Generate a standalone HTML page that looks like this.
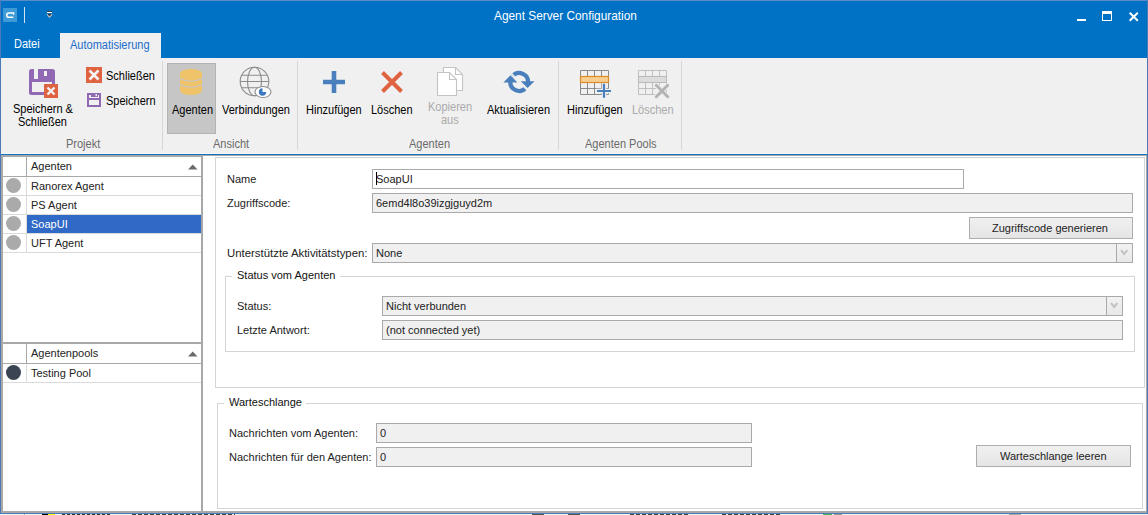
<!DOCTYPE html>
<html><head><meta charset="utf-8">
<style>
*{margin:0;padding:0;box-sizing:border-box}
html,body{width:1148px;height:515px;overflow:hidden;background:#fff}
body{position:relative;font-family:"Liberation Sans",sans-serif;font-size:11px;color:#000}
.a{position:absolute}
svg.a{overflow:visible}
.r{position:absolute;white-space:nowrap;font-size:12px;line-height:14px;transform:scaleX(0.917);transform-origin:0 0;color:#000}
.t{position:absolute;white-space:nowrap;font-size:11px;line-height:13px;color:#222}
.bx{position:absolute;border:1px solid #a9a9a9;background:#f0f0f0}
.sep{position:absolute;width:1px;background:#d6d6d6}
.ln{position:absolute;background:#dadada}
.grp{position:absolute;border:1px solid #d5d5d5}
.btn{position:absolute;border:1px solid #adadad;background:linear-gradient(#f0f0f0,#e5e5e5)}
.dot{position:absolute;width:15px;height:15px;border-radius:50%;background:#aaa}
</style></head><body>
<!-- ===== title bar ===== -->
<div class="a" style="left:0;top:0;width:1148px;height:58px;background:#0072c6"></div>
<div class="a" style="left:0;top:0;width:1148px;height:1px;background:#5a8cc8"></div>
<div class="a" style="left:3px;top:8px;width:14px;height:14px;background:#3d9ad6"></div>
<svg class="a" style="left:3px;top:8px" width="14" height="14"><path d="M10.8 5.1H5.8A2.05 2.05 0 0 0 5.8 9.2H10.3" fill="none" stroke="#fff" stroke-width="1.5"/><path d="M10.6 4.4V6.8" stroke="#fff" stroke-width="1.4"/></svg>
<div class="a" style="left:24px;top:7px;width:1px;height:16px;background:#d5e0ee"></div>
<svg class="a" style="left:46px;top:10px" width="8" height="9"><rect x="1" y="1" width="5" height="1" fill="#3a3a3a"/><rect x="1" y="2" width="5" height="1" fill="#fff"/><path d="M0.8 4H6.2L3.5 7.8Z" fill="#3a3a3a"/><path d="M1 4.2L3.5 7.4L6 4.2" fill="none" stroke="#fff" stroke-width="0.9"/></svg>
<div class="t" style="left:494px;top:9px;font-size:11.85px;line-height:14px;color:#fff">Agent Server Configuration</div>
<div class="a" style="left:1077px;top:19px;width:9px;height:2px;background:#fff"></div>
<div class="a" style="left:1102px;top:11px;width:10px;height:10px;border:1px solid #fff;border-top-width:3px"></div>
<svg class="a" style="left:1129px;top:12px" width="10" height="10"><path d="M0.7 0.7L8.8 8.8M8.8 0.7L0.7 8.8" stroke="#fff" stroke-width="2"/></svg>

<!-- ===== tabs ===== -->
<div class="r" style="left:14px;top:37px;color:#fff">Datei</div>
<div class="a" style="left:60px;top:33px;width:101px;height:25px;background:#f0f0f0"></div>
<div class="r" style="left:70px;top:38px;color:#1b6ecb">Automatisierung</div>

<!-- ===== ribbon ===== -->
<div class="a" style="left:0;top:58px;width:1148px;height:96px;background:#f0f0f0"></div>
<div class="a" style="left:0;top:153px;width:1148px;height:1px;background:#faf6f0"></div>
<div class="a" style="left:0;top:154px;width:1148px;height:1px;background:#0f72c9"></div>
<div class="sep" style="left:162px;top:61px;height:89px"></div>
<div class="sep" style="left:297px;top:61px;height:89px"></div>
<div class="sep" style="left:558px;top:61px;height:89px"></div>
<div class="sep" style="left:681px;top:61px;height:89px"></div>
<div class="a" style="left:167px;top:63px;width:49px;height:71px;background:#c6c6c6;border:1px solid #b3b3b3"></div>

<!-- save & close icon -->
<svg class="a" style="left:29px;top:69px" width="30" height="30">
 <path d="M0 2.5A2.5 2.5 0 0 1 2.5 0H5V10H0Z" fill="#9168b4"/>
 <path d="M9 0H23.5A2.5 2.5 0 0 1 26 2.5V10H9Z" fill="#9168b4"/>
 <rect x="15" y="2" width="3" height="5" fill="#f0f0f0"/>
 <rect x="0" y="10" width="26" height="3" fill="#9168b4"/>
 <path d="M0 13H3V23H15V26H2.5A2.5 2.5 0 0 1 0 23.5Z" fill="#9168b4"/>
 <rect x="23" y="13" width="3" height="2" fill="#9168b4"/>
 <rect x="15" y="15" width="14" height="14" fill="#df6340"/>
 <path d="M18.5 18.5L25.5 25.5M25.5 18.5L18.5 25.5" stroke="#f4f4f4" stroke-width="2.4"/>
</svg>
<!-- small close -->
<svg class="a" style="left:86px;top:67px" width="16" height="16">
 <rect width="16" height="16" fill="#df6340"/>
 <path d="M3.5 3.5L12.5 12.5M12.5 3.5L3.5 12.5" stroke="#f4f4f4" stroke-width="2.6"/>
</svg>
<!-- small save -->
<svg class="a" style="left:87px;top:93px" width="14" height="14">
 <path d="M1 1H13V13H1Z" fill="none" stroke="#9168b4" stroke-width="2"/>
 <rect x="4" y="0" width="7" height="4" fill="#9168b4"/>
 <rect x="8.5" y="1" width="1.5" height="2.2" fill="#f0f0f0"/>
 <rect x="1" y="5" width="12" height="2" fill="#9168b4"/>
</svg>
<!-- database -->
<svg class="a" style="left:180px;top:69px" width="22" height="26">
 <rect x="0" y="4" width="22" height="18" fill="#efc36a"/>
 <ellipse cx="11" cy="4.5" rx="11" ry="4.5" fill="#efc36a"/>
 <ellipse cx="11" cy="21.5" rx="11" ry="4.5" fill="#efc36a"/>
 <path d="M0 9.5Q11 15 22 9.5M0 15.5Q11 21 22 15.5" fill="none" stroke="#c6c6c6" stroke-width="1.2"/>
</svg>
<!-- globe -->
<svg class="a" style="left:239px;top:66px" width="34" height="32">
 <g fill="none" stroke="#8c8c8c" stroke-width="1.1">
  <circle cx="15.5" cy="15.5" r="14.3"/>
  <ellipse cx="15.5" cy="15.5" rx="7" ry="14.3"/>
  <path d="M1.2 15.5H29.8M3 9.2H28M3 21.8H28"/>
 </g>
 <ellipse cx="24" cy="26" rx="8" ry="5.5" fill="#fff" stroke="#8c8c8c" stroke-width="1.1"/>
 <path d="M23.5 22.3A3.7 3.7 0 1 0 27.2 26H23.5Z" fill="#3d78c0"/>
</svg>
<!-- plus -->
<svg class="a" style="left:323px;top:71px" width="22" height="22">
 <path d="M11 0V22M0 11H22" stroke="#4a7fbd" stroke-width="4.6"/>
</svg>
<!-- big X -->
<svg class="a" style="left:381px;top:71px" width="22" height="22">
 <path d="M1.5 1.5L20.5 20.5M20.5 1.5L1.5 20.5" stroke="#df6340" stroke-width="4"/>
</svg>
<!-- copy pages -->
<svg class="a" style="left:436px;top:66px" width="30" height="32">
 <path d="M7.5 1.5H19.5L26.5 8.5V24.5H7.5Z" fill="#fff" stroke="#c4c4c4" stroke-width="1.1"/>
 <path d="M19.5 1.5V8.5H26.5" fill="none" stroke="#c4c4c4" stroke-width="1.1"/>
 <path d="M1.5 6.5H13.5L20.5 13.5V29.5H1.5Z" fill="#fff" stroke="#c4c4c4" stroke-width="1.1"/>
 <path d="M13.5 6.5V13.5H20.5" fill="none" stroke="#c4c4c4" stroke-width="1.1"/>
</svg>
<!-- refresh -->
<svg class="a" style="left:500px;top:66px" width="40" height="32">
 <path d="M12.9 9.7A8.9 8.9 0 0 1 28.1 16.5" fill="none" stroke="#4a7fbd" stroke-width="4.3"/>
 <path d="M20.8 15.2H34.5L27.6 22Z" fill="#4a7fbd"/>
 <path d="M25.5 22.3A8.9 8.9 0 0 1 10.3 15.5" fill="none" stroke="#4a7fbd" stroke-width="4.3"/>
 <path d="M3.4 16.5H17.4L10.5 9.3Z" fill="#4a7fbd"/>
 <path d="M10.5 6.5L18.5 14.5M20.5 17.5L28 25" stroke="#f0f0f0" stroke-width="1.1"/>
</svg>
<!-- table + plus -->
<svg class="a" style="left:580px;top:70px" width="32" height="28">
 <g fill="none" stroke="#8a8a8a" stroke-width="1">
  <path d="M0.5 0.5H28.5V24.5H0.5Z"/>
  <path d="M7.5 0.5V24.5M14.5 0.5V24.5M21.5 0.5V24.5M0.5 6.5H28.5M0.5 12.5H28.5M0.5 18.5H28.5"/>
 </g>
 <rect x="0.5" y="6.5" width="28" height="6" fill="#f6cf90" stroke="#e08b2a" stroke-width="1.2"/>
 <path d="M24 13V29M16 21H32" stroke="#f0f0f0" stroke-width="4.6"/>
 <path d="M24 13.8V27.7M17 21H31" stroke="#4a7fbd" stroke-width="2.2"/>
</svg>
<!-- table + X disabled -->
<svg class="a" style="left:638px;top:70px" width="32" height="28">
 <g fill="none" stroke="#bfbfbf" stroke-width="1">
  <path d="M0.5 0.5H28.5V24.5H0.5Z"/>
  <path d="M7.5 0.5V24.5M14.5 0.5V24.5M21.5 0.5V24.5M0.5 6.5H28.5M0.5 12.5H28.5M0.5 18.5H28.5"/>
 </g>
 <rect x="0.5" y="6.5" width="28" height="6" fill="#dcdcdc" stroke="#b9b9b9" stroke-width="1"/>
 <path d="M18 15L30 27M30 15L18 27" stroke="#f0f0f0" stroke-width="5"/>
 <path d="M18.3 15.3L29.7 26.7M29.7 15.3L18.3 26.7" stroke="#b3b3b3" stroke-width="3" stroke-linecap="round"/>
</svg>

<div class="r" style="left:13px;top:102px">Speichern &amp;</div>
<div class="r" style="left:18px;top:115px">Schließen</div>
<div class="r" style="left:106px;top:69px">Schließen</div>
<div class="r" style="left:106px;top:94px">Speichern</div>
<div class="r" style="left:172px;top:103px">Agenten</div>
<div class="r" style="left:222px;top:103px">Verbindungen</div>
<div class="r" style="left:306px;top:103px">Hinzufügen</div>
<div class="r" style="left:371px;top:103px">Löschen</div>
<div class="r" style="left:428px;top:100px;color:#aaa">Kopieren</div>
<div class="r" style="left:441px;top:113px;color:#aaa">aus</div>
<div class="r" style="left:487px;top:103px">Aktualisieren</div>
<div class="r" style="left:567px;top:103px">Hinzufügen</div>
<div class="r" style="left:632px;top:103px;color:#aaa">Löschen</div>
<div class="r" style="left:66px;top:137px;color:#6a6a6a">Projekt</div>
<div class="r" style="left:213px;top:137px;color:#6a6a6a">Ansicht</div>
<div class="r" style="left:409px;top:137px;color:#6a6a6a">Agenten</div>
<div class="r" style="left:585px;top:137px;color:#6a6a6a">Agenten Pools</div>

<!-- ===== left panel ===== -->
<div class="a" style="left:1px;top:155px;width:202px;height:358px;border:2px solid #a8a8a8;background:#fff"></div>
<div class="a" style="left:26px;top:157px;width:1px;height:19px;background:#a8a8a8"></div>
<div class="a" style="left:3px;top:176px;width:198px;height:1px;background:#a8a8a8"></div>
<div class="ln" style="left:26px;top:177px;width:1px;height:76px"></div>
<div class="ln" style="left:3px;top:195px;width:198px;height:1px"></div>
<div class="ln" style="left:3px;top:214px;width:198px;height:1px"></div>
<div class="ln" style="left:3px;top:233px;width:198px;height:1px"></div>
<div class="ln" style="left:3px;top:252px;width:198px;height:1px"></div>
<div class="a" style="left:27px;top:215px;width:174px;height:18px;background:#3169c6"></div>
<svg class="a" style="left:188px;top:164px" width="10" height="6"><path d="M0 5.5H9.5L4.75 0.5Z" fill="#6b6b6b"/></svg>
<div class="t" style="left:31px;top:160px">Agenten</div>
<div class="dot" style="left:6px;top:178px"></div>
<div class="dot" style="left:6px;top:197px"></div>
<div class="dot" style="left:6px;top:216px"></div>
<div class="dot" style="left:6px;top:235px"></div>
<div class="t" style="left:31px;top:180px">Ranorex Agent</div>
<div class="t" style="left:31px;top:199px">PS Agent</div>
<div class="t" style="left:31px;top:218px;color:#fff">SoapUI</div>
<div class="t" style="left:31px;top:237px">UFT Agent</div>

<div class="a" style="left:1px;top:342px;width:202px;height:2px;background:#a8a8a8"></div>
<div class="a" style="left:26px;top:344px;width:1px;height:19px;background:#a8a8a8"></div>
<div class="a" style="left:3px;top:363px;width:198px;height:1px;background:#a8a8a8"></div>
<div class="ln" style="left:26px;top:364px;width:1px;height:19px"></div>
<div class="ln" style="left:3px;top:382px;width:198px;height:1px"></div>
<svg class="a" style="left:188px;top:351px" width="10" height="6"><path d="M0 5.5H9.5L4.75 0.5Z" fill="#6b6b6b"/></svg>
<div class="t" style="left:31px;top:347px">Agentenpools</div>
<div class="dot" style="left:6px;top:365px;background:#3a4452"></div>
<div class="t" style="left:31px;top:367px">Testing Pool</div>

<!-- ===== right panel ===== -->
<div class="a" style="left:203px;top:155px;width:944px;height:358px;border-top:1px solid #a8a8a8;border-right:1px solid #a8a8a8;border-bottom:2px solid #a8a8a8"></div>
<div class="grp" style="left:215px;top:157px;width:930px;height:231px"></div>

<div class="t" style="left:227px;top:173px">Name</div>
<div class="bx" style="left:372px;top:169px;width:592px;height:20px;background:#fff"></div>
<div class="a" style="left:376px;top:172px;width:1px;height:13px;background:#000"></div>
<div class="t" style="left:376px;top:173px">SoapUI</div>

<div class="t" style="left:227px;top:197px">Zugriffscode:</div>
<div class="bx" style="left:372px;top:193px;width:761px;height:20px"></div>
<div class="t" style="left:376px;top:197px">6emd4l8o39izgjguyd2m</div>

<div class="btn" style="left:969px;top:217px;width:164px;height:22px"></div>
<div class="t" style="left:992px;top:222px">Zugriffscode generieren</div>

<div class="t" style="left:227px;top:247px;transform:scaleX(1.035);transform-origin:0 0">Unterstützte Aktivitätstypen:</div>
<div class="bx" style="left:372px;top:243px;width:761px;height:20px"></div>
<div class="a" style="left:1116px;top:244px;width:1px;height:18px;background:#a9a9a9"></div>
<div class="a" style="left:1117px;top:244px;width:15px;height:18px;background:linear-gradient(#f2f2f2,#e8e8e8)"></div>
<svg class="a" style="left:1120px;top:249px" width="9" height="8"><path d="M1 1.2L4.2 5L7.4 1.2" fill="none" stroke="#c2c2c2" stroke-width="2"/></svg>
<div class="t" style="left:376px;top:247px">None</div>

<div class="grp" style="left:225px;top:276px;width:910px;height:76px"></div>
<div class="a" style="left:232px;top:270px;width:108px;height:12px;background:#fff"></div>
<div class="t" style="left:237px;top:269px;color:#111">Status vom Agenten</div>

<div class="t" style="left:237px;top:300px">Status:</div>
<div class="bx" style="left:382px;top:296px;width:741px;height:20px"></div>
<div class="a" style="left:1106px;top:297px;width:1px;height:18px;background:#a9a9a9"></div>
<div class="a" style="left:1107px;top:297px;width:15px;height:18px;background:linear-gradient(#f2f2f2,#e8e8e8)"></div>
<svg class="a" style="left:1110px;top:302px" width="9" height="8"><path d="M1 1.2L4.2 5L7.4 1.2" fill="none" stroke="#c2c2c2" stroke-width="2"/></svg>
<div class="t" style="left:386px;top:300px">Nicht verbunden</div>

<div class="t" style="left:237px;top:324px">Letzte Antwort:</div>
<div class="bx" style="left:382px;top:320px;width:741px;height:20px"></div>
<div class="t" style="left:386px;top:324px">(not connected yet)</div>

<div class="grp" style="left:217px;top:403px;width:926px;height:106px"></div>
<div class="a" style="left:224px;top:397px;width:82px;height:12px;background:#fff"></div>
<div class="t" style="left:229px;top:396px;color:#111">Warteschlange</div>

<div class="t" style="left:229px;top:427px">Nachrichten vom Agenten:</div>
<div class="bx" style="left:376px;top:423px;width:376px;height:20px"></div>
<div class="t" style="left:380px;top:427px">0</div>
<div class="t" style="left:229px;top:451px">Nachrichten für den Agenten:</div>
<div class="bx" style="left:376px;top:447px;width:376px;height:20px"></div>
<div class="t" style="left:380px;top:451px">0</div>

<div class="btn" style="left:976px;top:445px;width:155px;height:22px"></div>
<div class="t" style="left:1000px;top:450px">Warteschlange leeren</div>

<!-- ===== window borders ===== -->
<div class="a" style="left:0;top:0;width:1px;height:514px;background:#4a7ab8"></div>
<div class="a" style="left:1147px;top:0;width:1px;height:514px;background:#4a7ab8"></div>
<div class="a" style="left:0;top:513px;width:1148px;height:1px;background:#4a7ab8"></div>
<div class="a" style="left:0;top:514px;width:1148px;height:1px;background:#f4f4f4"></div>
<div class="a" style="left:24px;top:514px;width:1px;height:1px;background:#bbb"></div>
<div class="a" style="left:42px;top:514px;width:6px;height:1px;background:#000"></div>
<div class="a" style="left:48px;top:514px;width:7px;height:1px;background:#ff0"></div>
<div class="a" style="left:62px;top:514px;width:48px;height:1px;background:repeating-linear-gradient(90deg,#333 0 3px,#ddd 3px 5px)"></div>
<div class="a" style="left:132px;top:514px;width:103px;height:1px;background:repeating-linear-gradient(90deg,#444 0 4px,#eee 4px 6px)"></div>
<div class="a" style="left:532px;top:514px;width:12px;height:1px;background:#555"></div>
<div class="a" style="left:568px;top:514px;width:12px;height:1px;background:#555"></div>
<div class="a" style="left:630px;top:514px;width:60px;height:1px;background:repeating-linear-gradient(90deg,#444 0 4px,#eee 4px 6px)"></div>
<div class="a" style="left:722px;top:514px;width:58px;height:1px;background:repeating-linear-gradient(90deg,#444 0 4px,#eee 4px 6px)"></div>
<div class="a" style="left:823px;top:514px;width:9px;height:1px;background:#4caf50"></div>
<div class="a" style="left:834px;top:514px;width:8px;height:1px;background:#999"></div>
<div class="a" style="left:1009px;top:514px;width:12px;height:1px;background:#aaa"></div>
</body></html>
